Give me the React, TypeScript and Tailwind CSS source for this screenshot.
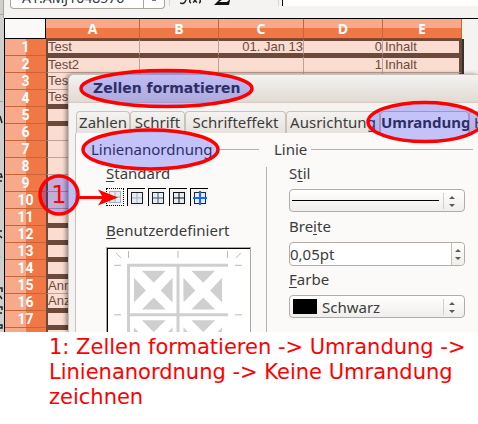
import type { ReactNode } from 'react'

type Row = { cells?: [string, string, string, string, string]; top?: boolean; bottom?: boolean }

const COLUMNS = ['A', 'B', 'C', 'D', 'E']

const ROWS: Row[] = [
  { cells: ['Test', '', '01. Jan 13', '0', 'Inhalt'], top: true, bottom: true },
  { cells: ['Test2', '', '', '1', 'Inhalt'], top: true },
  { cells: ['Test3', '', '', '', ''] },
  { cells: ['Test4', '', '', '', ''], bottom: true },
  { top: true, bottom: true },
  { top: true },
  {},
  {},
  {},
  {},
  { bottom: true },
  { top: true, bottom: true },
  { top: true, bottom: true },
  { top: true, bottom: true },
  { cells: ['Anna', '', '', '', ''], top: true },
  { cells: ['Anzahl', '', '', '', ''], bottom: true },
  { top: true, bottom: true },
]

const TABS = ['Zahlen', 'Schrift', 'Schrifteffekt', 'Ausrichtung', 'Umrandung', 'Hintergrund']
const TAB_WIDTHS = ['w-[54px]', 'w-[55px]', 'w-[101px]', 'w-[94px]', 'w-[89px]', 'w-[100px]']

const PRESETS = [
  { label: 'Keine Umrandung', frame: '#a3b0bd', cross: '#a3b0bd' },
  { label: 'Nur Umrandung außen', frame: '#1a1f26', cross: '#a3b0bd' },
  { label: 'Umrandung und waagerechte Linien', frame: '#1a1f26', cross: '#4a545f' },
  { label: 'Umrandung und alle Linien', frame: '#111111', cross: '#111111' },
  { label: 'Umrandung ohne innere Linien', frame: '#1a2a3c', cross: '#1a66ff' },
]

function cellEdges(row: Row) {
  if (row.top && row.bottom) return 'border-t-2 border-b-3 border-y-[#6b4a3c]'
  if (row.top) return 'border-t-2 border-t-[#6b4a3c] border-b border-b-[#bfa297]'
  if (row.bottom) return 'border-b-3 border-b-[#6b4a3c]'
  return 'border-b border-b-[#bfa297]'
}

function Toolbar() {
  return (
    <div className="ml-[3px] flex h-[18px] items-start overflow-hidden border-l border-[#a8a49e] bg-[#f4f3f1]">
      <div className="ml-[6px] flex h-[9px] w-[155px] items-end rounded-b border border-t-0 border-[#aaa49c] bg-white">
        <input
          aria-label="Namensfeld"
          defaultValue="A1:AMJ1048576"
          className="h-5 w-[133px] shrink-0 border-r border-[#aaa49c] pl-[11px] font-['Noto_Sans'] text-sm text-[#333] outline-none"
        />
        <span className="mb-[7px] ml-2 h-px w-1 bg-[#777]" />
      </div>
      <span className="ml-1 h-[6px] w-px bg-[#d8d4cf]" />
      <svg width="52" height="6" className="ml-[10px]" aria-hidden="true">
        <path d="M0 3q4 2 6-3M10 0q-1 2 1 3M13 2.500l3-2.500M14 0l3 2.500M20 0q1 2-1 3" fill="none" stroke="#222" strokeWidth="1.500" />
        <path d="M34 5l5-5h3l-3 2h8l2-2h1l-1 5z" fill="#111" />
      </svg>
      <span className="ml-[46px] h-[6px] w-px bg-[#d8d4cf]" />
      <div className="ml-[3px] h-[6px] grow border-l border-black bg-white" />
    </div>
  )
}

function Sheet() {
  return (
    <div className="ml-1 flex border-t border-l border-black bg-[#f4f3f1]">
      <table className="w-[457px] table-fixed border-separate border-spacing-0">
        <colgroup>
          <col className="w-[41px]" />
          <col className="w-[94px]" />
          <col className="w-[79px]" />
          <col className="w-[85px]" />
          <col className="w-[79px]" />
          <col className="w-[79px]" />
        </colgroup>
        <thead>
          <tr className="h-5">
            <th className="border-r border-b border-black bg-[#faf9f7] p-0" />
            {COLUMNS.map(name => (
              <th
                key={name}
                scope="col"
                className="border-r border-b border-r-[#c9643a] border-b-[#8a4a30] bg-linear-to-b from-[#f7a98a] from-50% to-[#f07846] to-50% p-0 font-['Open_Sans'] text-sm leading-[18px] font-bold text-white"
              >
                {name}
              </th>
            ))}
          </tr>
        </thead>
        <tbody>
          {ROWS.map((row, i) => (
            <tr key={i} className="h-[17px]">
              <th
                scope="row"
                className="border-b border-[#c9643a] bg-linear-to-r from-[#f7a98a] from-50% to-[#f07846] to-50% p-0 font-['Roboto'] text-sm leading-4 font-bold text-white"
              >
                {i + 1}
              </th>
              {COLUMNS.map((name, c) => (
                <td
                  key={name}
                  className={`h-[17px] bg-[#fadcd0] p-0 font-['Liberation_Sans'] text-[13px] whitespace-nowrap text-[#6b4a3c] ${cellEdges(row)} ${
                    c === 0 ? 'border-l-2 border-l-[#6b4a3c]' : ''
                  } ${c === 4 ? 'border-r-3 border-r-[#6b4a3c] pl-[2px]' : 'border-r border-r-[#bfa297]'}`}
                >
                  <div className={`flex h-3 items-center leading-3 ${c === 2 || c === 3 ? 'justify-end' : ''}`}>
                    {row.cells?.[c]}
                  </div>
                </td>
              ))}
            </tr>
          ))}
          <tr className="h-[17px]">
            <th className="bg-linear-to-r from-[#f7a98a] from-50% to-[#f07846] to-50%" />
            <td colSpan={5} className="border-t-2 border-l-2 border-[#6b4a3c] bg-[#fadcd0]" />
          </tr>
        </tbody>
      </table>
      <div className="mt-5 w-[2px] bg-[#333]" />
    </div>
  )
}

// what sticks out of the window behind, on the left edge
function WindowBehind() {
  return (
    <svg width="3" height="332" className="absolute top-0 left-0" fill="none" aria-hidden="true">
      <path d="M0 14.500h3M0 101.500h3" stroke="#a8a49e" />
      <path
        d="M0 116l2 7M0 174h1l1 3H0M0 181h2M0 231h2M0 236l2 2M0 288h2v4M0 296l2 3M0 307h2v3M0 313h2M0 325h2v3H0"
        stroke="#222"
        strokeWidth="1.500"
      />
      <path d="M0 257h2" stroke="#8ad0e0" />
    </svg>
  )
}

function Heading({ children }: { children: ReactNode }) {
  return (
    <div className="flex h-5 items-center gap-1 leading-5">
      <h2>{children}</h2>
      <span className="h-px grow bg-[#b4b0ab]" />
    </div>
  )
}

function Arrows() {
  return (
    <svg width="8" height="14" viewBox="0 0 8 14" aria-hidden="true">
      <path d="M1 5l3-3 3 3zM1 10l3 3 3-3z" fill="#5c5a57" />
    </svg>
  )
}

function PresetIcon({ frame, cross }: { frame: string; cross: string }) {
  return (
    <svg width="14" height="14" viewBox="0 0 14 14" fill="none" aria-hidden="true">
      <rect x="1.500" y="1.500" width="11" height="11" fill="#e4ecf4" stroke={frame} />
      {cross === '#1a66ff' ? (
        <path d="M7 0v14M0 7h14" stroke={cross} strokeWidth="2" />
      ) : (
        <path d="M7 2v10M2 7h10" stroke={cross} strokeWidth="1" />
      )}
    </svg>
  )
}

function BorderPreview() {
  return (
    <div className="mt-[7px] w-[145px] border border-[#aaa6a0]">
      <svg
        width="143"
        height="98"
        viewBox="0 1 143 98"
        className="border-t border-l border-black bg-white"
        role="img"
        aria-label="Vorschau der Umrandung"
      >
        <path
          d="M8 5l5 5M134 5l-5 5M20.500 3v7M70.500 3v7M120.500 3v7M6 17.500h7M6 67.500h7M128 17.500h7M128 67.500h7"
          stroke="#b8b8b8"
          fill="none"
        />
        <g fill="#cfcfcf">
          <path d="M19 16h102v3H19zM19 66h102v3H19zM19 16h3v90h-3zM69 16h3v90h-3z" />
          {[0, 50].map(x =>
            [0, 50].map(y => (
              <path
                key={`${x}-${y}`}
                transform={`translate(${x} ${y})`}
                d="M34 23h24L46 35zM34 62h24L46 50zM26 30v25l12-12zM65 30v25L53 43z"
              />
            )),
          )}
        </g>
      </svg>
    </div>
  )
}

function BorderTab() {
  return (
    <div className="flex grow border-l border-[#c8c2ba] bg-[#fbfaf8] pt-[6px]">
      <section className="w-[183px] shrink-0 pl-[15px]">
        <Heading>Linienanordnung</Heading>
        <div className="pl-[15px]">
          <h3 className="mt-1 h-5 leading-5"><u className="underline-offset-2">S</u>tandard</h3>
          <div className="mt-[5px] flex gap-[3px]">
            {PRESETS.map((preset, i) => (
              <button
                key={preset.label}
                aria-label={preset.label}
                className={`flex size-[18px] items-center justify-center bg-[#f4f3f1] ${
                  i === 0 ? 'border border-dotted border-black' : 'border-t border-l border-black'
                }`}
              >
                <PresetIcon frame={preset.frame} cross={preset.cross} />
              </button>
            ))}
          </div>
          <h3 className="mt-[14px] h-5 leading-5"><u className="underline-offset-2">B</u>enutzerdefiniert</h3>
          <BorderPreview />
        </div>
      </section>
      <section className="min-w-0 grow pr-[5px] pl-[15px]">
        <Heading>Linie</Heading>
        <div className="flex">
          <div className="mt-2 -ml-2 h-[171px] w-px shrink-0 bg-[#b4b0ab]" />
          <div className="min-w-0 grow pr-2 pl-[22px]">
            <label htmlFor="stil" className="mt-1 block h-5 leading-5">S<u className="underline-offset-2">t</u>il</label>
            <button id="stil" className="mt-[6px] flex h-[23px] w-full items-center rounded border border-[#b4aca4] bg-linear-to-b from-white to-[#f0eeeb] pr-2 pl-[2px]">
              <span className="h-px grow bg-black" />
              <span className="mx-1 h-4 w-px bg-[#d2cdc7]" />
              <Arrows />
            </button>
            <label htmlFor="breite" className="mt-1 block h-5 leading-5">Bre<u className="underline-offset-2">i</u>te</label>
            <div className="mt-[6px] flex h-6 items-center rounded border border-[#b4aca4] bg-white">
              <input id="breite" defaultValue="0,05pt" className="h-full min-w-0 grow bg-transparent outline-none" />
              <span className="flex h-full w-[17px] items-center justify-center rounded-r border-l border-[#c5bfb8] bg-linear-to-b from-white to-[#f0eeeb]">
                <Arrows />
              </span>
            </div>
            <label htmlFor="farbe" className="mt-[3px] block h-5 leading-5"><u className="underline-offset-2">F</u>arbe</label>
            <div className="mt-[6px] flex h-[23px] items-center rounded border border-[#b4aca4] bg-linear-to-b from-white to-[#f0eeeb] pr-2 pl-[3px]">
              <span className="h-[15px] w-6 shrink-0 bg-black" />
              <select id="farbe" className="h-5 min-w-0 grow appearance-none bg-transparent pl-[5px] leading-5 outline-none">
                <option>Schwarz</option>
              </select>
              <span className="mx-1 h-4 w-px bg-[#d2cdc7]" />
              <Arrows />
            </div>
          </div>
        </div>
      </section>
    </div>
  )
}

function FormatDialog() {
  return (
    <div
      role="dialog"
      aria-label="Zellen formatieren"
      className="absolute top-[74px] right-0 bottom-0 left-[68px] flex flex-col overflow-hidden rounded-tl-md border-t border-l border-[#c8c2ba] bg-[#f4f3f1] font-['Noto_Sans'] text-[15px] text-[#3c3c3c] shadow-[-2px_0_4px_rgba(0,0,0,0.4)]"
    >
      <div className="flex h-7 shrink-0 items-center border-b border-[#d5cbc2] bg-linear-to-b from-[#f4f3f1] to-[#e0dad3] pb-px pl-6">
        <h1 className="font-['DejaVu_Sans'] text-sm leading-5 font-bold">Zellen formatieren</h1>
      </div>
      <div className="ml-[6px] flex grow flex-col pt-2">
        <div role="tablist" className="flex h-[22px] shrink-0 items-end overflow-hidden pl-px">
          {TABS.map((tab, i) => (
            <button
              key={tab}
              role="tab"
              aria-selected={i === 4}
              className={`h-[22px] shrink-0 rounded-t border border-b-0 border-[#c8c2ba] pb-[2px] leading-5 whitespace-nowrap ${TAB_WIDTHS[i]} ${
                i === 4 ? 'bg-[#fbfaf8] font-bold' : 'bg-linear-to-b from-[#f4f3f1] to-[#e6e2dd]'
              } ${i === 5 ? 'pl-1 text-left' : 'text-center'}`}
            >
              {tab}
            </button>
          ))}
        </div>
        <BorderTab />
      </div>
    </div>
  )
}

function Annotations() {
  return (
    <svg width="478" height="332" className="pointer-events-none absolute top-0 left-0" aria-hidden="true">
      <g fill="#0000ff" fillOpacity="0.22" stroke="#ff0000" strokeWidth="3.500">
        <ellipse cx="166.500" cy="88.500" rx="85.500" ry="18" />
        <ellipse cx="425" cy="122" rx="57" ry="19.500" />
        <ellipse cx="150.500" cy="149.500" rx="67.500" ry="19.500" />
        <circle cx="59" cy="195" r="19" />
      </g>
      <path d="M78 197.500h26" stroke="#ff0000" strokeWidth="3" />
      <path d="M118 197.500l-20-8 5 8-5 8z" fill="#ff0000" />
      <text x="59" y="203" textAnchor="middle" fill="#ff0000" className="font-['DejaVu_Sans'] text-2xl">1</text>
    </svg>
  )
}

export default function App() {
  return (
    <main className="min-h-dvh bg-white">
      <div className="relative h-[332px] overflow-hidden bg-[#d0cfcb]">
        <WindowBehind />
        <Toolbar />
        <Sheet />
        <FormatDialog />
        <Annotations />
      </div>
      <p className="pt-[3px] pl-[49px] font-['DejaVu_Sans'] text-[21px] leading-[25px] text-[#ff0000]">
        1: Zellen formatieren -&gt; Umrandung -&gt; Linienanordnung -&gt; Keine Umrandung zeichnen
      </p>
    </main>
  )
}
